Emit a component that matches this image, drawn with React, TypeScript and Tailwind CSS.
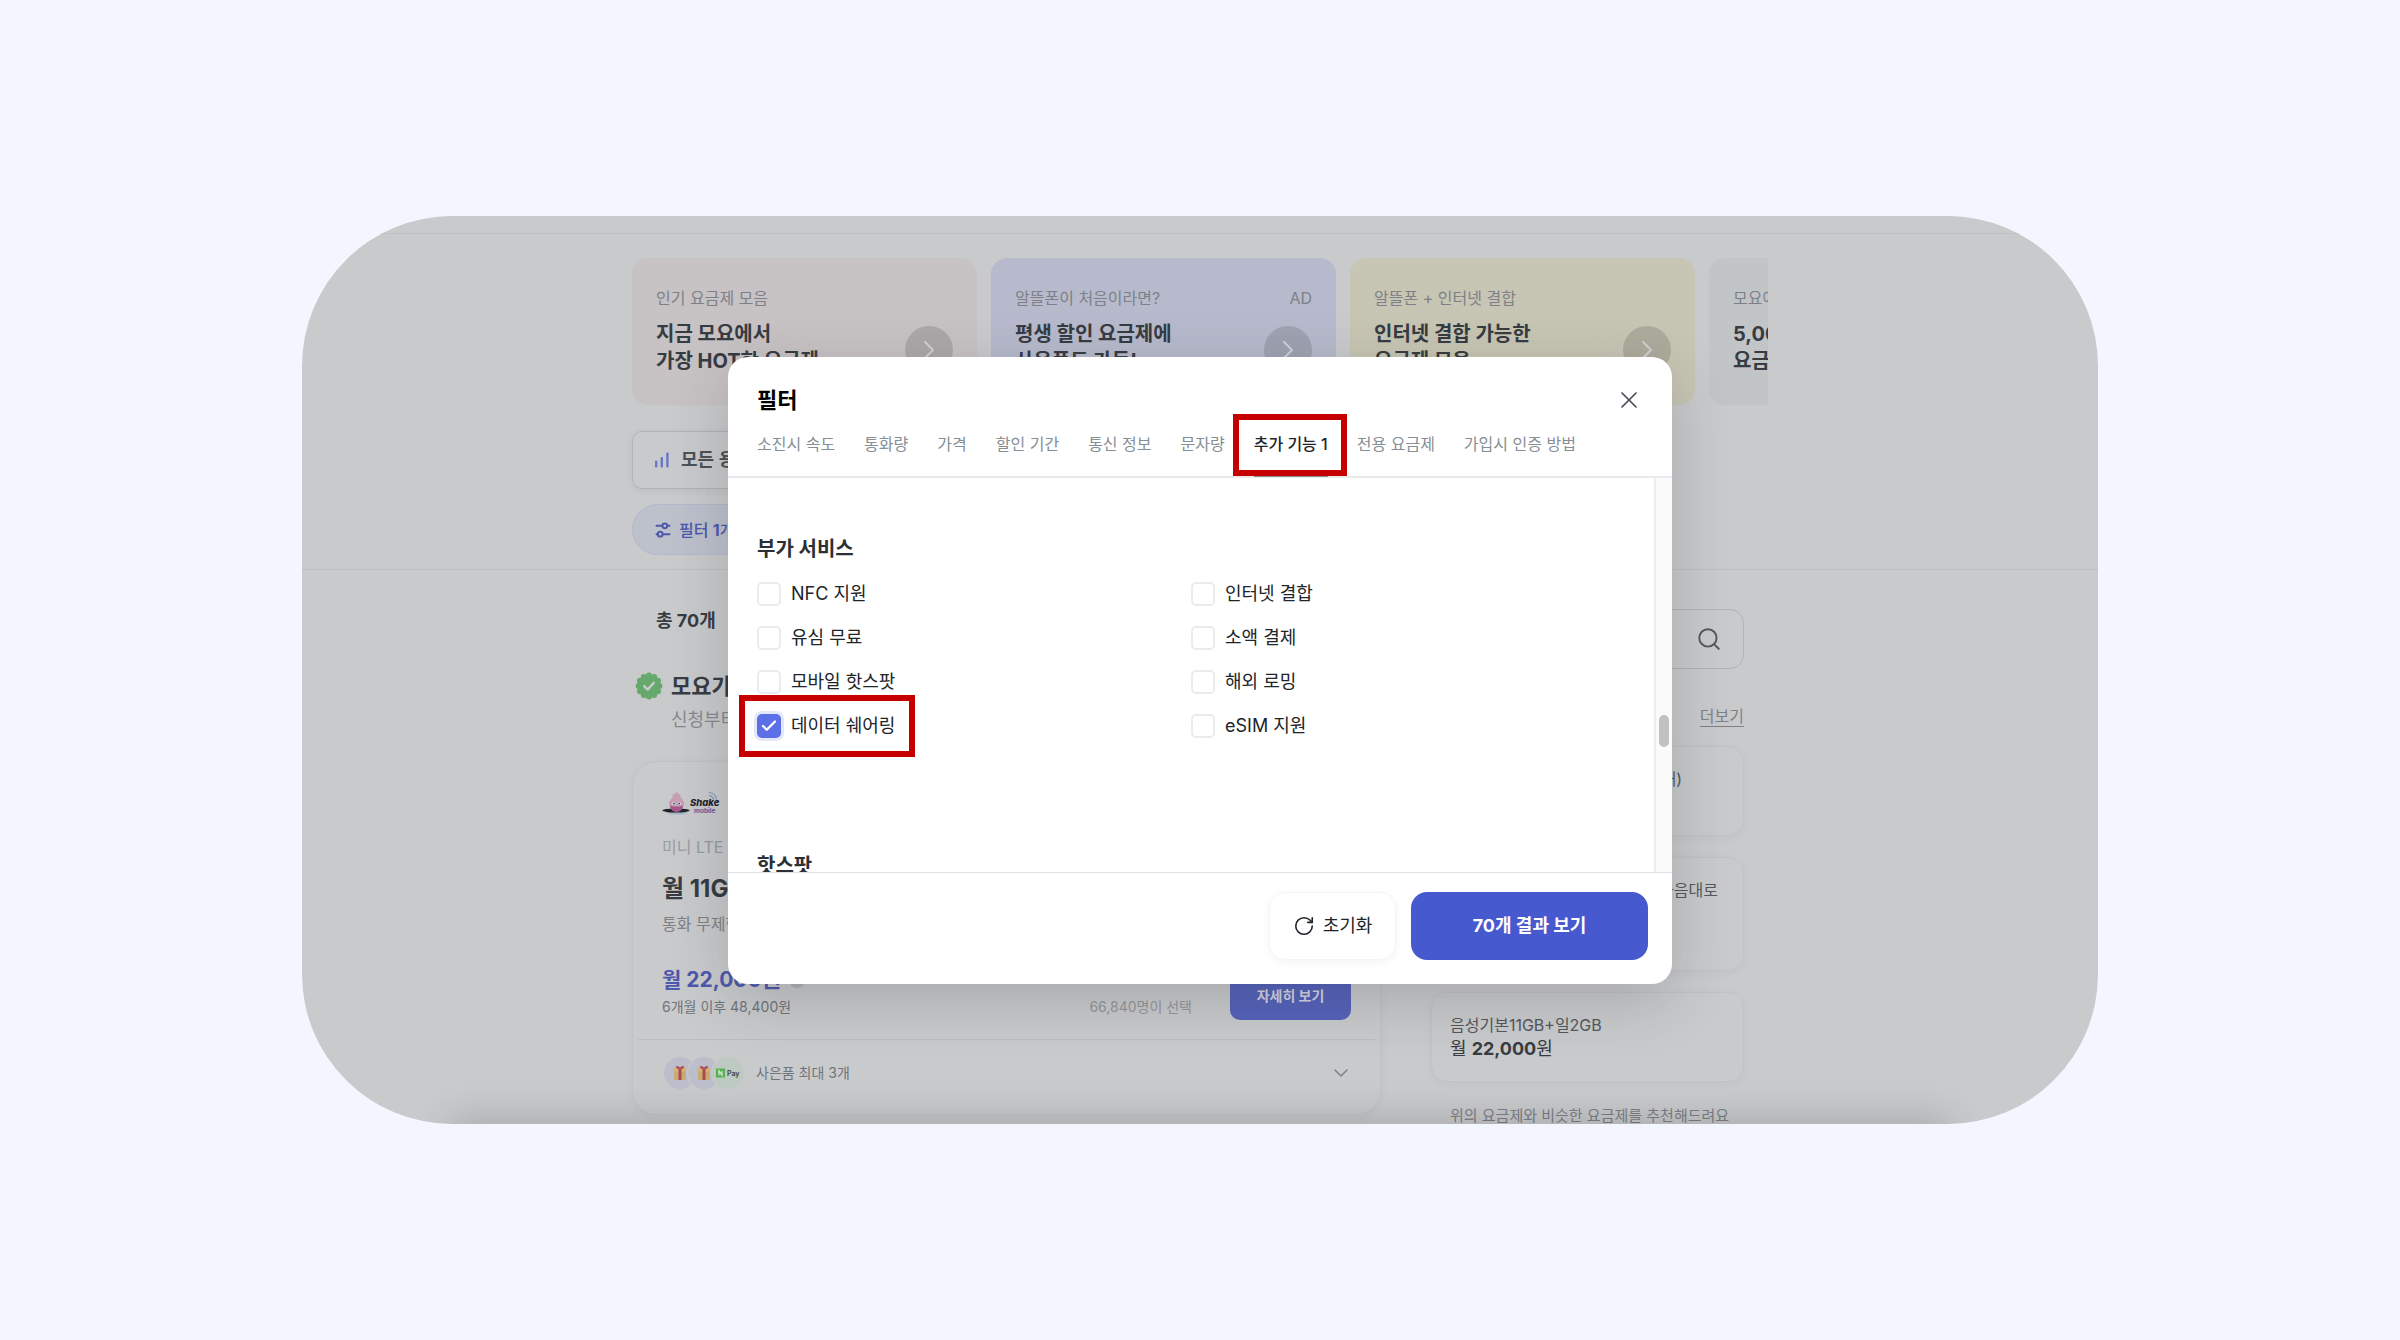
import { Check, ChevronDown, ChevronRight, RotateCw, Search, X } from "lucide-react";
import type { ReactNode } from "react";

const promos = [
  { label: "인기 요금제 모음", lines: ["지금 모요에서", "가장 HOT한 요금제"], bg: "bg-[#c7c2c4]", arrow: "bg-[#aca8aa]" },
  { label: "알뜰폰이 처음이라면?", lines: ["평생 할인 요금제에", "사은품도 가득!"], bg: "bg-[#b7bacc]", arrow: "bg-[#9fa2b1]", ad: true },
  { label: "알뜰폰 + 인터넷 결합", lines: ["인터넷 결합 가능한", "요금제 모음"], bg: "bg-[#c7c5b3]", arrow: "bg-[#adab9c]" },
  { label: "모요에서만", lines: ["5,000원", "요금제"], bg: "bg-[#c1c5c8]", arrow: "bg-[#a8abae]" },
];

const tabs = ["소진시 속도", "통화량", "가격", "할인 기간", "통신 정보", "문자량", "추가 기능 1", "전용 요금제", "가입시 인증 방법"];
const activeTab = "추가 기능 1";

const services = [
  { id: "nfc", label: "NFC 지원" },
  { id: "internet", label: "인터넷 결합" },
  { id: "usim", label: "유심 무료" },
  { id: "micropay", label: "소액 결제" },
  { id: "hotspot", label: "모바일 핫스팟" },
  { id: "roaming", label: "해외 로밍" },
  { id: "sharing", label: "데이터 쉐어링", checked: true, marked: true },
  { id: "esim", label: "eSIM 지원" },
];

function BarsIcon() {
  return (
    <svg width="14" height="16" viewBox="0 0 14 16" fill="#6a76c6">
      <rect x="0" y="8.5" width="2.4" height="7" rx="1" />
      <rect x="5.6" y="5" width="2.4" height="10.5" rx="1" />
      <rect x="11.2" y="0.5" width="2.4" height="15" rx="1" />
    </svg>
  );
}

function SlidersIcon() {
  return (
    <svg width="16" height="16" viewBox="0 0 16 16" fill="none" stroke="#4d59ac" strokeWidth="2" strokeLinecap="round">
      <path d="M1.5 3.8H7.2M12.4 3.8H14.5M1.5 12.2H2.6M8 12.2H14.5" />
      <circle cx="9.8" cy="3.8" r="2.4" />
      <circle cx="5.2" cy="12.2" r="2.4" />
    </svg>
  );
}

function VerifiedBadge() {
  return (
    <svg width="28" height="28" viewBox="0 0 28 28">
      <g fill="#67a86c">
        <circle cx="14" cy="14" r="11.5" />
        {Array.from({ length: 12 }, (_, i) => {
          const a = (i * Math.PI) / 6;
          return <circle key={i} cx={14 + 10.4 * Math.cos(a)} cy={14 + 10.4 * Math.sin(a)} r="3" />;
        })}
      </g>
      <path d="M9.2 14.2L12.6 17.6L18.8 10.8" fill="none" stroke="#c9cacc" strokeWidth="2.4" strokeLinecap="round" strokeLinejoin="round" />
    </svg>
  );
}

function ShakeLogo() {
  return (
    <svg width="58" height="24" viewBox="0 0 58 24" role="img" aria-label="Shake mobile">
      <ellipse cx="15" cy="21.5" rx="11" ry="2.2" fill="#a3bac7" />
      <ellipse cx="14" cy="19.5" rx="13.5" ry="2" fill="#1f2226" />
      <path d="M7.5 11c0 6 2 10 7 10s7-4 7-10z" fill="#a8568f" />
      <path d="M7.5 14c-1-4 1.5-6.500 3-7C10 4 12 3 13 2.600c.6-1.600 3-1.300 3.200.2 1.800.5 3 1.700 2.300 3.700 2 .8 3.600 3.500 3 7.500-2 2-11 2-14 0z" fill="#c9a0b3" />
      <circle cx="11.800" cy="12.5" r="1.6" fill="#dcdfe6" />
      <circle cx="17.400" cy="12.5" r="1.6" fill="#dcdfe6" />
      <circle cx="12" cy="12.6" r="0.9" fill="#2d3a5c" />
      <circle cx="17.2" cy="12.6" r="0.9" fill="#2d3a5c" />
      <g fill="none" stroke="#7796c4" strokeWidth="1.200">
        <path d="M47 1.500c4 .3 7 3 7.600 7" />
        <path d="M47 4.500c2.500.3 4.300 2 4.800 4.500" />
      </g>
      <text x="28" y="15" fontSize="9.5" fontWeight="800" fontStyle="italic" fill="#24222b" fontFamily="Inter, sans-serif">Shake</text>
      <text x="32" y="22" fontSize="6.5" fontWeight="700" fill="#6a559f" fontFamily="Inter, sans-serif">mobile</text>
    </svg>
  );
}

function GiftIcon() {
  return (
    <svg width="14" height="16" viewBox="0 0 14 16">
      <rect x="1" y="3" width="12" height="12" rx="1" fill="#c9ab70" />
      <rect x="0.5" y="3" width="13" height="3.5" rx="1" fill="#d2b679" />
      <rect x="5.5" y="3" width="3" height="12" fill="#b04a52" />
      <path d="M7 4C5 4 2.500 3.500 3 1.800 3.600.4 6 1.200 7 3c1-1.800 3.400-2.600 4-1.200C11.500 3.500 9 4 7 4z" fill="#b04a52" />
    </svg>
  );
}

function PayIcon() {
  return (
    <svg width="24" height="12" viewBox="0 0 24 12">
      <rect x="0" y="1.5" width="9" height="9" fill="#55b04f" />
      <path d="M3 8.200V3.900L6 8.200V3.900" fill="none" stroke="#d5e2d5" strokeWidth="1.3" />
      <text x="11" y="8.800" fontSize="7" fontWeight="600" fill="#3b4045" fontFamily="Inter, sans-serif">Pay</text>
    </svg>
  );
}

// red frame around the element that the guide points to
function Marker({ className }: { className: string }) {
  return <span aria-hidden="true" className={`pointer-events-none absolute border-[6px] border-[#c60000] ${className}`} />;
}

function PromoCarousel() {
  return (
    <div className="flex gap-[14px] overflow-hidden pl-6">
      {promos.map((promo) => (
        <a key={promo.label} href="#" className={`flex h-[147px] w-[345px] shrink-0 flex-col rounded-2xl px-6 pt-7 ${promo.bg}`}>
          <span className="flex justify-between text-base leading-6 text-[#7d8187]">
            <span>{promo.label}</span>
            {promo.ad && <span>AD</span>}
          </span>
          <span className="flex items-start justify-between">
            <span className="mt-[11px] text-xl leading-[27px] font-bold text-[#373c42]">
              {promo.lines[0]}
              <br />
              {promo.lines[1]}
            </span>
            <span className={`mt-4 flex size-12 items-center justify-center rounded-full ${promo.arrow}`}>
              <ChevronRight className="size-8 text-[#d0d1d4]" strokeWidth={1.5} />
            </span>
          </span>
        </a>
      ))}
    </div>
  );
}

function PlanCard() {
  return (
    <article className="mt-[29px] rounded-3xl border border-[#c1c2c5] pb-[25px] shadow-[0_2px_10px_rgba(0,0,0,0.04)]">
      <div className="px-[29px] pt-[29px]">
        <div className="flex h-6 items-center">
          <ShakeLogo />
        </div>
        <p className="mt-5 text-base leading-6 text-[#979ba1]">미니 LTE</p>
        <h3 className="mt-[14px] text-2xl leading-8 font-bold text-[#373c42]">월 11GB</h3>
        <p className="mt-[7px] text-base leading-6 text-[#7d8187]">통화 무제한</p>
        <div className="mt-[30px] flex items-end">
          <div className="flex-1 pb-[3px]">
            <p className="flex items-center gap-2 text-[21px] leading-7 font-bold text-[#4d59ac]">
              월 22,000원
              <span className="flex size-4 items-center justify-center rounded-full bg-[#b0b2b6] text-[#c9cacc]">
                <ChevronDown className="size-3" />
              </span>
            </p>
            <p className="mt-[3px] text-sm leading-5 text-[#70757b]">6개월 이후 48,400원</p>
          </div>
          <p className="mr-[38px] pb-[3px] text-sm leading-5 text-[#94979d]">66,840명이 선택</p>
          <button type="button" className="h-12 w-[121px] rounded-[10px] bg-[#5562ba] text-sm font-bold text-[#d3d5e2]">자세히 보기</button>
        </div>
      </div>
      <div className="mx-[5px] mt-[19px] flex items-center border-t border-[#bcbdc0] px-[22px] pt-[17px]">
        <div className="ml-1 flex -space-x-2">
          <span className="flex size-8 items-center justify-center rounded-full bg-[#bcbfcb] ring-1 ring-[#c9cacc]"><GiftIcon /></span>
          <span className="flex size-8 items-center justify-center rounded-full bg-[#bcbfcb] ring-1 ring-[#c9cacc]"><GiftIcon /></span>
          <span className="flex size-8 items-center justify-center rounded-full bg-[#bccac1] ring-1 ring-[#c9cacc]"><PayIcon /></span>
        </div>
        <p className="ml-3 flex-1 text-sm leading-5 text-[#70757b]">사은품 최대 3개</p>
        <ChevronDown className="size-6 text-[#7d8187]" strokeWidth={1.5} />
      </div>
    </article>
  );
}

function RecommendCard({ children, price }: { children: ReactNode; price: string }) {
  return (
    <li className="rounded-2xl border border-[#c1c2c5] px-[18px] py-5 text-base leading-6 text-[#53585e] shadow-[0_2px_10px_rgba(0,0,0,0.04)]">
      <div>{children}</div>
      <p className="text-lg leading-6 text-[#373c42]">
        월 <b>{price}</b>원
      </p>
    </li>
  );
}

function PlansPage() {
  return (
    <div className="w-full">
      <div className="h-[18px] border-b border-[#bebfc2]" />
      <section className="border-b border-[#bebfc2] pt-6 pr-6 pb-[14px]">
        <div className="mx-auto max-w-[1160px]">
          <PromoCarousel />
          <div className="flex flex-col items-start px-6">
            <button type="button" className="mt-[26px] flex h-[58px] w-2/3 items-center gap-3 rounded-[10px] border border-[#b1b3b8] px-[22px] text-lg font-semibold text-[#4c5157] shadow-[0_2px_8px_rgba(0,0,0,0.06)]">
              <BarsIcon />
              모든 용량
            </button>
            <button type="button" className="mt-[15px] flex h-[51px] items-center gap-2 rounded-full border border-[#b3b8cc] bg-[#bdc1cc] px-[22px] text-base font-medium text-[#4d59ac]">
              <SlidersIcon />
              <span>필터 <b>1</b>개</span>
            </button>
          </div>
        </div>
      </section>
      <div className="pr-6">
        <div className="mx-auto flex max-w-[1160px] gap-[50px] px-6">
          <section className="flex-1 pt-[37px]">
            <p className="pl-6 text-lg leading-7 font-bold text-[#373c42]">총 70개</p>
            <div className="mt-[35px] flex gap-2 pl-[3px]">
              <span className="mt-[2px]"><VerifiedBadge /></span>
              <div>
                <h2 className="text-[22px] leading-8 font-bold text-[#373c42]">모요가</h2>
                <p className="mt-[6px] text-lg leading-6 text-[#868a90]">신청부터</p>
              </div>
            </div>
            <PlanCard />
          </section>
          <aside className="w-[313px] pt-[39px]">
            <label className="flex h-[60px] items-center rounded-[14px] border border-[#b1b3b8] px-[21px]">
              <input type="search" aria-label="요금제 검색" className="min-w-0 flex-1 bg-transparent outline-none" />
              <Search className="size-[26px] text-[#53585e]" strokeWidth={1.75} />
            </label>
            <div className="mt-[35px] flex justify-end text-base leading-6">
              <a href="#" className="text-[#7d8187] underline underline-offset-4">더보기</a>
            </div>
            <ul className="mt-[18px] flex flex-col gap-[21px]">
              <RecommendCard price="22,000">
                <p className="w-[232px] text-right">대)</p>
              </RecommendCard>
              <RecommendCard price="22,000">
                <p className="w-[268px] text-right">마음대로</p>
                <p>11GB+</p>
              </RecommendCard>
              <RecommendCard price="22,000">음성기본11GB+일2GB</RecommendCard>
            </ul>
            <p className="mt-6 pl-[19px] text-[15px] leading-5 whitespace-nowrap text-[#7d8187]">위의 요금제와 비슷한 요금제를 추천해드려요</p>
          </aside>
        </div>
      </div>
    </div>
  );
}

function FilterDialog() {
  return (
    <div role="dialog" aria-label="필터" className="flex w-[944px] flex-col overflow-hidden rounded-[20px] bg-white shadow-[0_16px_60px_rgba(33,37,41,0.2)]">
      <header className="border-b-2 border-[#e9eaec] px-[29px] pt-[27px]">
        <div className="flex items-center justify-between">
          <h2 className="text-[22px] leading-8 font-bold text-black">필터</h2>
          <button type="button" aria-label="닫기">
            <X className="size-7 text-[#495057]" strokeWidth={1.5} />
          </button>
        </div>
        <nav className="mt-4 flex gap-[29px] text-base leading-6 whitespace-nowrap text-[#868e96]">
          {tabs.map((tab) =>
            tab === activeTab ? (
              <button key={tab} type="button" className="relative -mb-px h-[45px] border-b-[3px] border-[#868e96] pb-[18px] font-medium text-[#212529]">
                {tab}
                <Marker className="-top-[18px] -right-[19px] -bottom-[2px] -left-[21px]" />
              </button>
            ) : (
              <button key={tab} type="button" className="h-11 pb-5">{tab}</button>
            ),
          )}
        </nav>
      </header>

      <div className="flex h-[394px] overflow-hidden">
        <div className="flex-1 px-[29px] pt-[57px] text-[#212529]">
          <h3 className="text-xl leading-7 font-bold text-[#2b3035]">부가 서비스</h3>
          <div className="mt-[19px] grid h-[156px] grid-cols-2 content-between">
            {services.map((service) => (
              <div key={service.id} className="flex">
                <label htmlFor={service.id} className="relative flex items-center gap-[10px] text-lg leading-6">
                  <span className="relative flex size-6">
                    <input
                      id={service.id}
                      type="checkbox"
                      defaultChecked={service.checked}
                      className="peer size-6 appearance-none rounded-[5px] border-2 border-[#e9ecef] bg-white checked:border-[#5c6fe6] checked:bg-[#5c6fe6] checked:ring-[3px] checked:ring-[#e3e7fc]"
                    />
                    <Check className="pointer-events-none absolute inset-0 m-auto hidden size-[18px] text-white peer-checked:block" strokeWidth={3} />
                  </span>
                  {service.label}
                  {service.marked && <Marker className="-top-[19px] -right-5 -bottom-[19px] -left-[18px]" />}
                </label>
              </div>
            ))}
          </div>
          <h3 className="mt-[114px] text-xl leading-7 font-bold text-[#2b3035]">핫스팟</h3>
        </div>
        <div aria-hidden="true" className="flex w-[18px] justify-center border-l-2 border-[#ededed] bg-[#fafafa] pt-[237px]">
          <span className="h-8 w-[10px] rounded-full bg-[#c1c1c1]" />
        </div>
      </div>

      <footer className="flex justify-end gap-[15px] border-t border-[#dee2e6] pt-[19px] pr-6 pb-6">
        <button type="button" className="flex h-[68px] w-[127px] items-center justify-center gap-2 rounded-2xl border border-[#f3f4f5] text-lg text-[#212529] shadow-[0_2px_8px_rgba(0,0,0,0.05)]">
          <RotateCw className="size-[22px]" strokeWidth={1.75} />
          초기화
        </button>
        <button type="button" className="h-[68px] w-[237px] rounded-2xl bg-[#4759cf] text-lg font-bold text-white">70개 결과 보기</button>
      </footer>
    </div>
  );
}

export default function App() {
  return (
    <main className="flex h-screen bg-[#f3f6ff] px-[302px] py-[216px] font-[Inter,'Noto_Sans_CJK_KR',sans-serif]">
      <div className="relative w-full overflow-hidden rounded-[150px] bg-[#c9cacc]">
        <PlansPage />
        {/* floating bar below the fold, only its shadow shows */}
        <div className="absolute inset-x-[150px] top-full h-10 shadow-[0_0_40px_rgba(0,0,0,0.22)]" />
        <div className="absolute inset-0 flex items-center justify-center">
          <FilterDialog />
        </div>
      </div>
    </main>
  );
}
